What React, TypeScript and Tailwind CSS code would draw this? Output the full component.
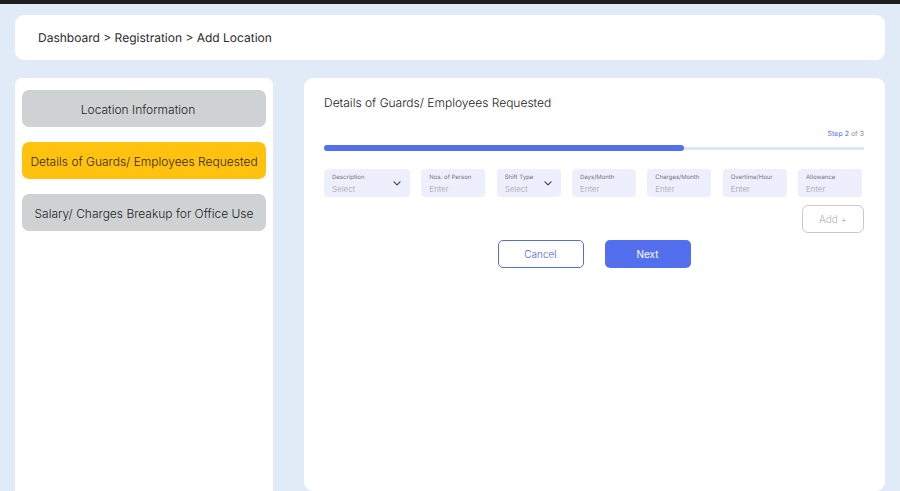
import { useId } from "react";

type FieldProps = { label: string; wide?: boolean; select?: boolean };

function Field({ label, wide = false, select = false }: FieldProps) {
  const id = useId();
  return (
    <div
      className={`relative flex h-7 min-w-0 flex-col rounded bg-[#eeeffc] px-2 pt-1 ${
        wide ? "basis-[86px]" : "basis-16"
      }`}
    >
      <label htmlFor={id} className="whitespace-nowrap text-[6px] leading-[9px] text-[#73737f]">
        {label}
      </label>
      {select ? (
        <>
          <select
            id={id}
            defaultValue=""
            className="mt-px h-3 w-full appearance-none bg-transparent text-[8px] font-light leading-[12px] text-[#a0a0ac] outline-none"
          >
            <option value="">Select</option>
          </select>
          <svg
            viewBox="0 0 8 6"
            className="pointer-events-none absolute right-[9px] top-[11px] h-[6px] w-2"
            fill="none"
            stroke="#45454f"
            strokeWidth="1.2"
            strokeLinecap="round"
            strokeLinejoin="round"
          >
            <path d="M1 1.8 4 4.9 7 1.8" />
          </svg>
        </>
      ) : (
        <input
          id={id}
          type="text"
          placeholder="Enter"
          className="mt-px h-3 w-full bg-transparent text-[8px] font-light leading-[12px] text-[#45454f] outline-none placeholder:text-[#a0a0ac]"
        />
      )}
    </div>
  );
}

const fields: FieldProps[] = [
  { label: "Description", wide: true, select: true },
  { label: "Nos. of Person" },
  { label: "Shift Type", select: true },
  { label: "Days/Month" },
  { label: "Charges/Month" },
  { label: "Overtime/Hour" },
  { label: "Allowance" },
];

export default function App() {
  return (
    <div className="flex min-h-screen flex-col border-t-4 border-[#1e1e1e] bg-[#e1ebf8] font-['Inter',sans-serif] text-[12px] leading-[15px] text-[#2b2b2b] [text-rendering:geometricPrecision]">
      <header className="mx-[15px] mt-[11px] rounded-[9px] bg-white px-[23px] py-[15px]">
        <nav aria-label="Breadcrumb">Dashboard &gt; Registration &gt; Add Location</nav>
      </header>

      <div className="mx-[15px] mt-[18px] flex grow gap-[31px]">
        <aside className="flex w-[258px] shrink-0 flex-col gap-[15px] rounded-t-[7px] bg-white px-[7px] pt-3 font-light">
          <button className="h-[37px] rounded-[7px] bg-[#ced2d3] pr-3 pt-[2px] text-[#1c1e1f]">
            Location Information
          </button>
          <button
            aria-current="step"
            className="h-[37px] rounded-[7px] bg-[#ffc20f] pt-[2px] text-[#382603]"
          >
            Details of Guards/ Employees Requested
          </button>
          <button className="h-[37px] rounded-[7px] bg-[#ced2d3] pt-[2px] text-[#1c1e1f]">
            Salary/ Charges Breakup for Office Use
          </button>
        </aside>

        <main className="min-w-0 grow rounded-[9px] bg-white pl-5 pr-[21px] pt-[17px]">
          <h1 className="font-light text-[#181818]">Details of Guards/ Employees Requested</h1>

          <p className="mt-[19px] text-right text-[7px] leading-[10px] text-[#8d8d99]">
            <span className="text-[#546fee]">Step 2</span> of 3
          </p>
          <div
            role="progressbar"
            aria-label="Step 2 of 3"
            aria-valuemin={0}
            aria-valuemax={3}
            aria-valuenow={2}
            className="mt-[6px] flex h-[6px] items-center"
          >
            <div className="h-[6px] w-2/3 rounded-full bg-[#546fee]" />
            <div className="h-[3px] grow bg-[#dfe6f3]" />
          </div>

          <form onSubmit={(e) => e.preventDefault()}>
            <div className="mt-[18px] flex justify-between pr-[2px]">
              {fields.map((field) => (
                <Field key={field.label} {...field} />
              ))}
            </div>
            <div className="mt-2 flex justify-end">
              <button
                type="button"
                className="h-7 w-[62px] rounded-md border border-[#c9c9cd] text-[10px] font-light text-[#b0b0b6]"
              >
                Add +
              </button>
            </div>
            <div className="mt-[7px] flex justify-center gap-[21px]">
              <button
                type="button"
                className="h-7 w-[86px] rounded-[5px] border border-[#546fd8] text-[10px] font-light text-[#4560e8]"
              >
                Cancel
              </button>
              <button
                type="submit"
                className="h-7 w-[86px] rounded-[5px] bg-[#546fee] text-[10px] text-white"
              >
                Next
              </button>
            </div>
          </form>
        </main>
      </div>
    </div>
  );
}
